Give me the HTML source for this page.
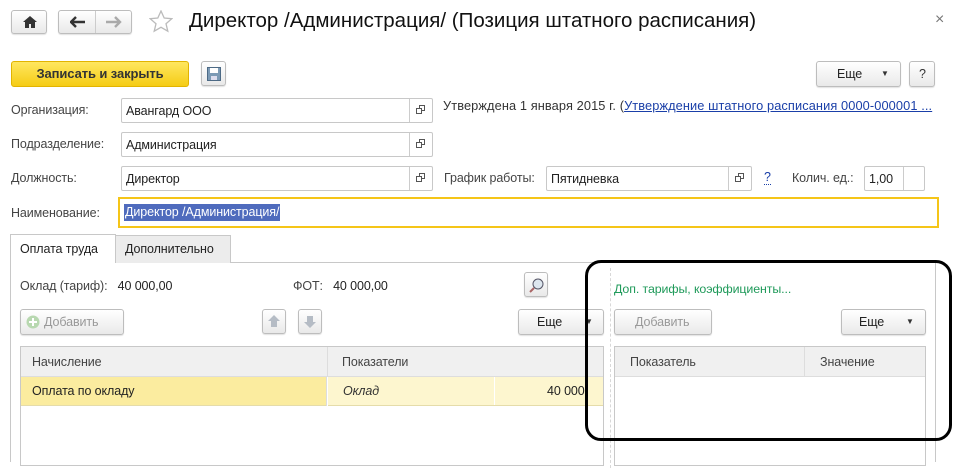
<!DOCTYPE html>
<html><head><meta charset="utf-8"><style>
*{box-sizing:border-box;margin:0;padding:0}
body{width:962px;height:458px;background:#fff;font-family:"Liberation Sans",sans-serif;font-size:12.5px;letter-spacing:-0.1px;color:#333;position:relative;overflow:hidden}
.a{position:absolute;white-space:nowrap}
.btn{position:absolute;border:1px solid #bdbdbd;border-radius:3px;background:linear-gradient(#fff,#e9e9e9);box-shadow:0 1px 1px rgba(0,0,0,.12)}
.fld{position:absolute;border:1px solid #c8c8c8;border-radius:2px;background:#fff;height:25px}
.fld span{position:absolute;left:4px;top:5px;color:#222;white-space:nowrap}
.fld i{position:absolute;right:0;top:0;width:23px;height:23px;border-left:1px solid #ccc}
.lbl{position:absolute;color:#444;white-space:nowrap}
.th{position:absolute;background:#f0f0f0;border-bottom:1px solid #ddd;color:#444}
</style></head><body>
<div class="btn" style="left:11px;top:10px;width:36px;height:24px"><svg class="a" style="left:11px;top:5px" width="14" height="12"><path d="M7 0L0 6h2v6h4V8h2v4h4V6h2z" fill="#333"/></svg></div>
<div class="btn" style="left:58px;top:10px;width:74px;height:24px"><div class="a" style="left:36px;top:0;width:1px;height:22px;background:#ccc"></div>
<svg class="a" style="left:11px;top:5px" width="16" height="12"><path d="M1 6h14M6 1L1 6l5 5" stroke="#333" stroke-width="2.4" fill="none"/></svg>
<svg class="a" style="left:47px;top:5px" width="16" height="12"><path d="M0 6h14M9 1l5 5-5 5" stroke="#aaa" stroke-width="2.4" fill="none"/></svg></div>
<svg class="a" style="left:149px;top:10px" width="24" height="23"><path d="M12 1l3.2 7 7.6.7-5.8 5 1.8 7.5L12 17.3 5.2 21.2 7 13.7 1.2 8.7 8.8 8z" fill="none" stroke="#bbb" stroke-width="1.3"/></svg>
<div class="a" style="left:189px;top:9px;font-size:20.5px;letter-spacing:0px;color:#111">Директор /Администрация/ (Позиция штатного расписания)</div>
<div class="a" style="left:935px;top:11px;font-size:16px;color:#777">×</div>

<div class="a" style="left:11px;top:61px;width:178px;height:26px;border:1px solid #e2b400;border-radius:3px;background:linear-gradient(#ffe760,#f5cc15);font-weight:bold;color:#333;text-align:center;line-height:24px;font-size:13px">Записать и закрыть</div>
<div class="btn" style="left:201px;top:61px;width:25px;height:25px"><svg class="a" style="left:5px;top:5px" width="14" height="14"><rect x=".5" y=".5" width="13" height="13" fill="#7c9ab5" stroke="#4d6a85"/><rect x="3" y="1" width="8" height="5" fill="#fff"/><rect x="4" y="9" width="6" height="4" fill="#dde"/></svg></div>
<div class="btn" style="left:816px;top:61px;width:85px;height:26px"><span class="a" style="left:20px;top:5px;color:#222">Еще</span><span class="a" style="left:64px;top:7px;font-size:8px">▼</span></div>
<div class="btn" style="left:909px;top:61px;width:26px;height:26px"><span class="a" style="left:9px;top:5px">?</span></div>

<div class="lbl" style="left:11px;top:103px">Организация:</div>
<div class="fld" style="left:121px;top:98px;width:312px"><span>Авангард ООО</span><i></i></div>
<div class="lbl" style="left:11px;top:137px">Подразделение:</div>
<div class="fld" style="left:121px;top:132px;width:312px"><span>Администрация</span><i></i></div>
<div class="lbl" style="left:11px;top:171px">Должность:</div>
<div class="fld" style="left:121px;top:166px;width:312px"><span>Директор</span><i></i></div>
<svg class="a" style="left:416px;top:105px" width="10" height="80"><g fill="none" stroke="#555"><path d="M.5 3.5h5v5h-5zM3.5 3.5v-3h5v5h-3"/><path d="M.5 37.5h5v5h-5zM3.5 37.5v-3h5v5h-3"/><path d="M.5 71.5h5v5h-5zM3.5 71.5v-3h5v5h-3"/></g></svg>

<div class="lbl" style="left:443px;top:98px;color:#333;font-size:12.8px;letter-spacing:0.1px">Утверждена 1 января 2015 г. (<span style="color:#1a3fa8;text-decoration:underline">Утверждение штатного расписания 0000-000001 ...</span></div>
<div class="lbl" style="left:444px;top:171px">График работы:</div>
<div class="fld" style="left:546px;top:166px;width:206px"><span>Пятидневка</span><i></i></div>
<svg class="a" style="left:735px;top:173px" width="10" height="10"><g fill="none" stroke="#555"><path d="M.5 3.5h5v5h-5zM3.5 3.5v-3h5v5h-3"/></g></svg>
<div class="a" style="left:764px;top:170px;color:#1a3fa8;border-bottom:1px dotted #1a3fa8;line-height:14px">?</div>
<div class="lbl" style="left:792px;top:171px">Колич. ед.:</div>
<div class="fld" style="left:864px;top:166px;width:61px"><span style="left:4px;color:#222">1,00</span><i style="width:21px"></i></div>

<div class="lbl" style="left:11px;top:206px">Наименование:</div>
<div class="a" style="left:118px;top:197px;width:821px;height:31px;border:2px solid #f5c518"></div>
<div class="a" style="left:124px;top:204px;height:17px;background:#4f6bbd;color:#fff;padding:1px 1px;line-height:15px">Директор /Администрация/</div>

<div class="a" style="left:10px;top:262px;width:926px;height:200px;border:1px solid #c8c8c8;border-bottom:0"></div>
<div class="a" style="left:115px;top:235px;width:116px;height:28px;background:#ececec;border:1px solid #c8c8c8;border-bottom:0"><span class="a" style="left:9px;top:6px;color:#222">Дополнительно</span></div>
<div class="a" style="left:10px;top:234px;width:106px;height:29px;background:#fff;border:1px solid #c8c8c8;border-bottom:0"><span class="a" style="left:9px;top:7px;color:#222">Оплата труда</span></div>

<div class="lbl" style="left:20px;top:279px">Оклад (тариф):&nbsp;&nbsp;&nbsp;<span style="color:#222">40 000,00</span></div>
<div class="lbl" style="left:293px;top:279px">ФОТ:&nbsp;&nbsp;&nbsp;<span style="color:#222">40 000,00</span></div>
<div class="btn" style="left:524px;top:272px;width:24px;height:25px"><svg class="a" style="left:4px;top:4px" width="16" height="16"><circle cx="9" cy="7" r="5" fill="#dde6ee" stroke="#556"/><path d="M5 11l-4 4" stroke="#a66" stroke-width="2"/></svg></div>

<div class="btn" style="left:20px;top:309px;width:104px;height:26px"><svg class="a" style="left:5px;top:5px" width="14" height="14"><circle cx="7" cy="7" r="6.5" fill="#b8d8b0"/><path d="M7 3v8M3 7h8" stroke="#fff" stroke-width="2"/></svg><span class="a" style="left:23px;top:5px;color:#999">Добавить</span></div>
<div class="btn" style="left:262px;top:309px;width:24px;height:25px"><svg class="a" style="left:5px;top:5px" width="12" height="13"><path d="M6 0L0 6h3v6h6V6h3z" fill="#b5bcc5"/></svg></div>
<div class="btn" style="left:298px;top:309px;width:24px;height:25px"><svg class="a" style="left:5px;top:5px" width="12" height="13"><path d="M6 13L0 7h3V1h6v6h3z" fill="#b5bcc5"/></svg></div>
<div class="btn" style="left:518px;top:309px;width:86px;height:26px"><span class="a" style="left:18px;top:5px;color:#222">Еще</span><span class="a" style="left:66px;top:7px;font-size:8px">▼</span></div>

<div class="a" style="left:20px;top:346px;width:584px;height:120px;border:1px solid #c8c8c8"></div>
<div class="th" style="left:21px;top:347px;width:582px;height:30px"><span class="a" style="left:11px;top:8px">Начисление</span><span class="a" style="left:321px;top:8px">Показатели</span><div class="a" style="left:306px;top:0;width:1px;height:30px;background:#ddd"></div></div>
<div class="a" style="left:21px;top:377px;width:306px;height:29px;background:#fbec9f;border-bottom:1px solid #e5dcaa"><span class="a" style="left:11px;top:7px;color:#222">Оплата по окладу</span></div>
<div class="a" style="left:328px;top:377px;width:275px;height:29px;background:#fdf6cf;border-bottom:1px solid #e5dcaa"><span class="a" style="left:15px;top:7px;font-style:italic;color:#333">Оклад</span><div class="a" style="left:166px;top:0;width:1px;height:28px;background:#fff"></div><span class="a" style="left:219px;top:7px;color:#222">40 000</span></div>
<div class="a" style="left:326px;top:377px;width:1px;height:29px;background:#ddd"></div>

<div class="a" style="left:610px;top:268px;height:200px;border-left:1px dashed #d8d8d8"></div>

<div class="a" style="left:614px;top:282px;color:#1f9a5a;font-size:12.4px">Доп. тарифы, коэффициенты...</div>
<div class="btn" style="left:614px;top:309px;width:98px;height:26px"><span class="a" style="left:20px;top:5px;color:#999">Добавить</span></div>
<div class="btn" style="left:841px;top:309px;width:85px;height:26px"><span class="a" style="left:17px;top:5px;color:#222">Еще</span><span class="a" style="left:64px;top:7px;font-size:8px">▼</span></div>
<div class="a" style="left:614px;top:346px;width:312px;height:120px;border:1px solid #c8c8c8"></div>
<div class="th" style="left:615px;top:347px;width:310px;height:30px"><span class="a" style="left:15px;top:8px">Показатель</span><span class="a" style="left:205px;top:8px">Значение</span><div class="a" style="left:189px;top:0;width:1px;height:30px;background:#ddd"></div></div>

<div class="a" style="left:585px;top:260px;width:367px;height:181px;border:3px solid #000;border-radius:16px"></div>
</body></html>
